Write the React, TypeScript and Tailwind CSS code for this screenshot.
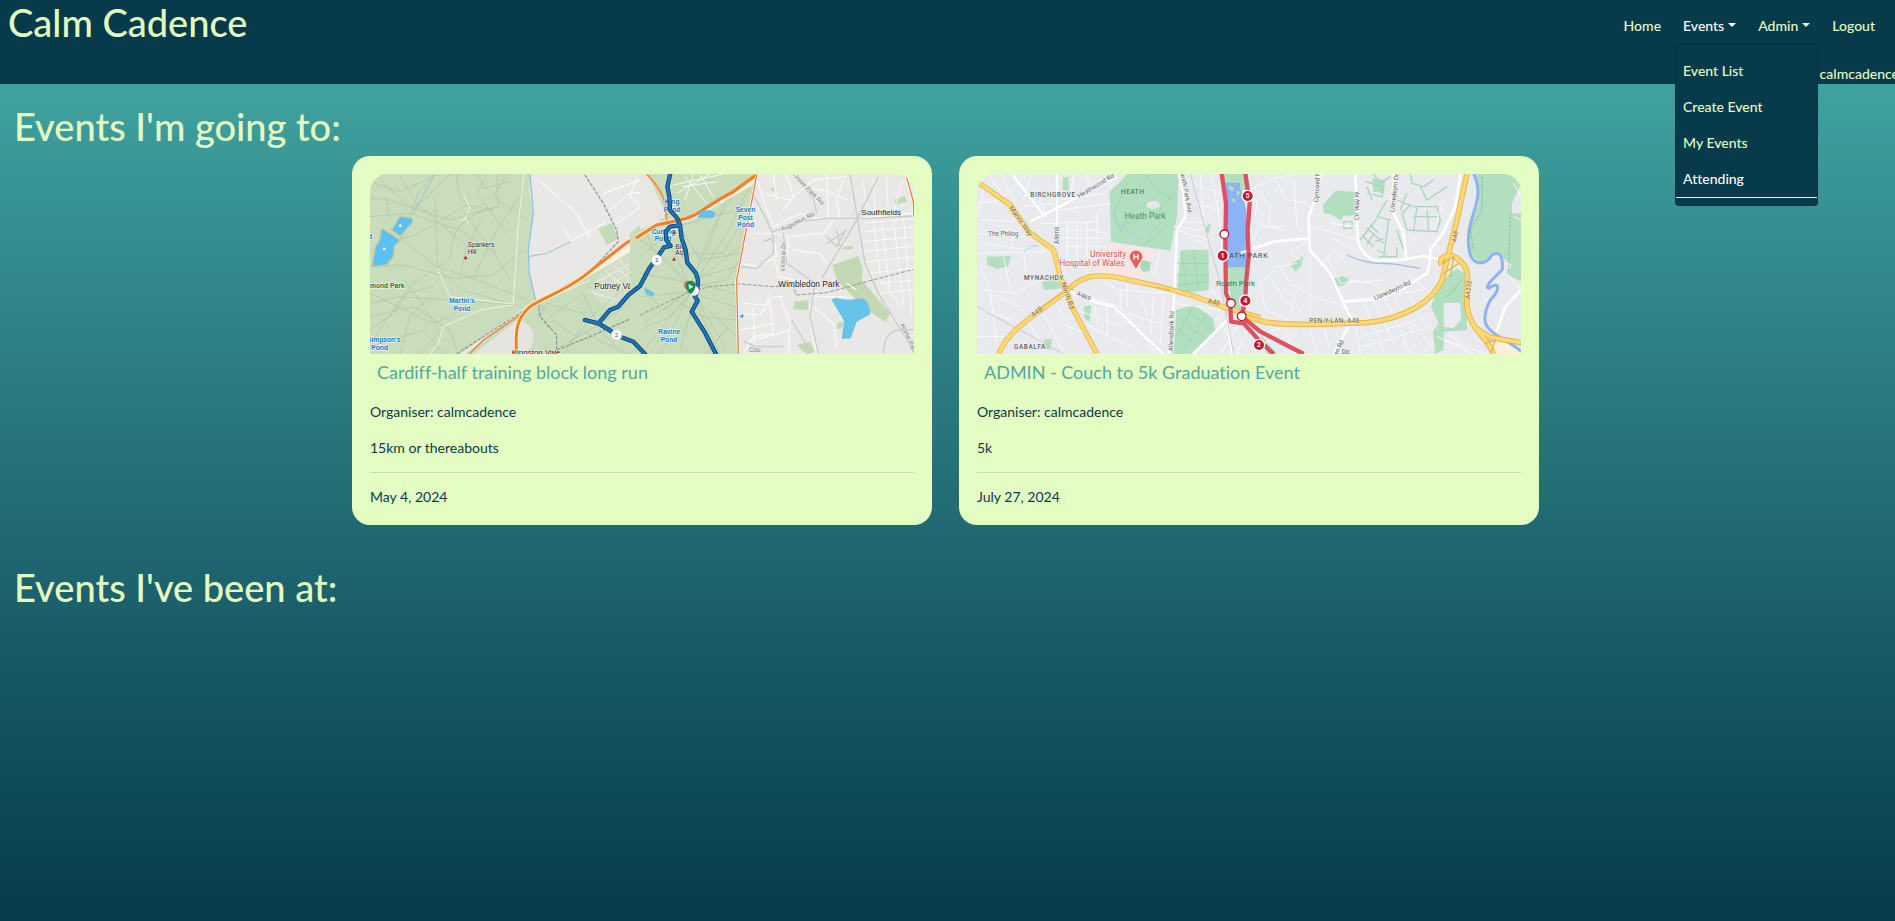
import React from "react";

const minor = { fill: "none", stroke: "#b5bfac", strokeWidth: 2 } as const;
const street = { fill: "none", stroke: "#f8f8f8", strokeWidth: 4 } as const;

function WimbledonMap() {
  return (
    <svg viewBox="0 0 1632 540" preserveAspectRatio="xMidYMid slice" role="img" aria-label="Route map of the Wimbledon area" className="block h-[180px] w-full rounded-t-[18px]" fontFamily="'Liberation Sans', sans-serif">
      <rect width="1632" height="540" fill="#e9e8e6" />
      <g transform="translate(-60 -72)">
        <path d="M60 72H540L538 120L550 200L535 300L536 360L555 450L330 612H60Z" fill="#c9dcbc" />
        <path d="M555 452L680 395L900 262V612H345L500 500Z" fill="#c9dcbc" />
        <path d="M370 612L500 512C545 510 560 555 545 590L520 612Z" fill="#e6e4de" />
        <path d="M745 235L785 220L806 265L770 285Z" fill="#c5dbb8" />
        <path d="M770 345L830 315L880 395L765 480L720 420Z" fill="#d4dfc9" />
        <g {...minor}>
          <path d="M60 95L150 125L260 75M60 145L110 148L300 210L440 170M80 80L190 180L300 72M108 148L120 205M150 80L200 160L340 280M250 75L205 130L155 270M255 140L262 350M320 72L325 130L360 180L310 260L300 330L265 352M60 200L180 190L330 240L440 310M440 72L445 170L380 190L330 225M385 72L400 115L475 95M60 300L150 265L260 350L370 385L530 450M145 270L205 250L350 165L430 180M60 350L160 345L310 385L430 375L520 300M340 185L420 290L480 390M262 352L190 400L130 490L60 540M60 460L150 440L310 450L500 465M60 500L190 470L300 540L320 600M160 390L210 450L270 545L210 612M60 430L250 520L300 500M75 560L165 430L250 410M150 612L180 500L240 440M265 360L340 420L490 465M400 200L350 290L330 380M520 120L440 240L370 380M60 590L220 540L280 612M410 72L380 130L470 250M470 72L430 140L530 210" />
          <path d="M565 455L620 520L680 560L750 470M600 500L700 430L740 520M630 590L720 540L900 420M640 612L690 540L830 612M760 470L840 400L900 370M570 500L590 460L700 490L800 590" />
        </g>
        <g {...street} strokeWidth="3" stroke="#eef2e6">
          <path d="M522 72L505 220L490 460M490 465L390 480L280 530L265 580L240 612M262 355L300 440M340 130L360 175L345 205L355 220M350 205L330 215M570 455L600 445L720 390M490 462L300 440M790 345L855 400M770 365L830 420M740 395L860 330M760 420L850 360M720 425L800 450M800 320L860 390" />
          <path d="M640 230L665 275M560 85L680 190L720 265M660 275L770 215M760 130L900 80M780 180L840 130L900 125M800 220L900 150M860 85L840 140L890 185" stroke="#fff" />
        </g>
        <path d="M540 72L550 190L535 300L538 370L557 450" fill="none" stroke="#8fc4df" strokeWidth="4" />
        <path d="M535 320L590 310L663 275M252 76L190 190" fill="none" stroke="#92c5d4" strokeWidth="3" />
        <path d="M320 612L555 460L720 365L805 275L800 240L760 160L703 72M565 458L570 500L620 555V612M620 600L720 560L900 480" fill="none" stroke="#979797" strokeWidth="4" strokeDasharray="11 4" />
        <path d="M358 612L400 570L515 492" fill="none" stroke="#ef812b" strokeWidth="4" />
        <path d="M500 612C495 540 500 505 540 470C585 440 640 425 700 380L900 262" fill="none" stroke="#fff1dc" strokeWidth="15" />
        <path d="M500 612C495 540 500 505 540 470C585 440 640 425 700 380L830 278L905 236" fill="none" stroke="#f28021" strokeWidth="9" />
        <path d="M95 235L133 258L150 272L133 290L130 320L110 345L65 351L77 288L88 270Z M125 240L150 198L188 204L188 217L150 259Z" fill="#5bc1f0" stroke="#c9caa0" strokeWidth="4" />
        <circle cx="151" cy="227" r="4" fill="#fff" /><circle cx="103" cy="297" r="4" fill="#fff" />
        <path d="M341 328L347 317L353 328Z" fill="#c1182d" />
        <path d="M882 420L900 405L920 425L905 442Z" fill="#6bbfe6" />
        <g fontSize="19" fill="#222" stroke="#eef2e6" strokeWidth="3" paintOrder="stroke">
          <text x="353" y="292">Spankers</text><text x="353" y="311">Hill</text>
          <text x="733" y="416" fontSize="25">Putney Vale</text><text x="485" y="616" fontSize="24">Kingston Vale</text>
        </g>
        <g fontSize="20" fontWeight="700" fill="#1677cf" stroke="#eaf5f4" strokeWidth="4" paintOrder="stroke">
          <text x="298" y="459">Martin's</text><text x="311" y="482">Pond</text><text x="51" y="575">Simpson's</text><text x="64" y="599">Pond</text>
          <text x="48" y="414" fill="#13763c">hmond Park</text><text x="54" y="267">d</text>
        </g>
      </g>
      <g transform="translate(810 -72)">
        <path d="M0 225L30 200L75 205L40 110L20 72H350L325 180L290 400L295 612H-30V250Z" fill="#c9dcbc" />
        <path d="M0 72L25 72L75 190L60 212L0 240Z" fill="#e8e7e3" />
        <path d="M577 345L655 318L668 355L665 390L750 490L738 516L690 485L640 440L590 390Z M765 148L795 138L800 154L765 166Z M462 455L505 450V480L460 478Z M610 290L640 287V298L608 299Z M470 585L510 575L525 605L500 612Z M390 115L405 112L402 126Z M595 515L610 515L605 535L590 538Z" fill="#c2d9b3" />
        <g {...minor} stroke="#b1c1ab">
          <path d="M0 320L110 230L290 180M0 370L160 400L300 290M10 520L150 420L260 250L330 110M20 590L150 430L290 470M150 410L40 300L20 250M150 410L100 300L40 240M150 410L220 230L290 120M155 410L260 390L300 330M0 440L150 425L240 612M60 612L150 430L290 560M120 600L165 440L260 600M0 270L60 310L150 405M165 400L285 430M180 380L290 350M120 230L180 330L300 310M10 420L70 480L140 430M0 540L90 500L155 425M200 612L270 520M75 430L190 500L290 510M130 310L250 310L290 240M190 340L240 190L270 130L330 110" />
        </g>
        <g {...street}>
          <path d="M350 85L380 180L400 230L480 190L530 205L640 205L820 190M370 130L450 150L520 90L620 80M400 72L410 150M440 72L460 140L430 180M560 72L565 200M610 90L590 150L600 205M510 115L570 125L620 150M340 250L400 250L410 320L350 350L310 340M400 250L445 260L440 340L510 390L530 430L510 470L515 540L530 612M450 260L550 250L580 210M460 300L540 310L560 340M400 325L420 380L500 400M310 460L380 465L390 430M300 490L360 495L400 440L430 440M340 470L345 590M390 460L400 550L340 560L310 612M420 440L450 520L445 612M300 540L400 520M310 580L450 540M530 440L620 440M520 470L580 520L590 590M620 400L650 420" />
          <path d="M670 220L820 205M675 245L820 230M672 275L820 260M674 305L820 287M680 335L820 320M690 370L820 355M710 400L820 390M720 430L820 420M700 210L720 370M725 210L750 430M760 205L790 460M790 200L815 500M730 400L790 480M670 90L680 190M700 80L705 190M740 80L745 190M790 85L760 190" strokeWidth="3" />
          <path d="M135 80L200 160M125 110L230 95M160 72L135 150M180 75L220 140M210 72L110 130M100 105L250 72" strokeWidth="3" />
        </g>
        <g fill="none" stroke="#cbcbcb" strokeWidth="4">
          <path d="M335 125L380 210L402 260L400 310L350 355L300 350M400 245L480 215L560 205L690 205L820 198M460 72L520 145L530 190M715 80L645 220L545 385M430 250L440 340L525 400L510 500L535 612M630 72L660 250L675 340L715 430L820 600M455 510L515 612M730 612C730 560 750 530 820 540M560 260L590 290L620 235M590 240L600 290M560 280L615 245M310 575L350 590L430 590M370 275L395 265V275" />
        </g>
        <path d="M0 495L150 425L210 410L300 402L400 410L460 405L468 435L560 428L680 395L820 358" fill="none" stroke="#999" strokeWidth="3" strokeDasharray="12 5" />
        <path d="M20 72C75 130 80 160 80 220" fill="none" stroke="#f2924b" strokeWidth="6" />
        <path d="M-12 264L50 225L110 212L150 204L330 100L350 75" fill="none" stroke="#fff0df" strokeWidth="16" />
        <path d="M-12 264L50 225L110 212C180 200 190 170 280 125L350 74" fill="none" stroke="#ef812b" strokeWidth="10" />
        <path d="M350 74L338 140L322 220L290 390L295 612M800 82L820 155L822 200" fill="none" stroke="#fff" strokeWidth="8" />
        <path d="M350 74L338 140L322 220L290 390L295 612M800 82L820 155L822 200" fill="none" stroke="#ef7a3a" strokeWidth="4" />
        <path d="M575 450C590 435 605 455 640 448C690 435 685 470 692 492L650 515L632 565L605 567L612 512Z M172 203L182 183L210 180L228 188L220 204Z M12 412L45 430L35 440L18 432Z" fill="#67c3ea" />
        <path d="M298 497h8v-7l5 7-5 7z" fill="#328fd0" />
        <g fontSize="20" fontWeight="700" fill="#1677cf" stroke="#eaf5f4" strokeWidth="4" paintOrder="stroke">
          <text x="74" y="163">King</text><text x="71" y="185">Pond</text><text x="35" y="251">Curling</text><text x="44" y="273">Pond</text>
          <text x="287" y="186">Seven</text><text x="295" y="209">Post</text><text x="292" y="232">Pond</text><text x="55" y="553">Ravine</text><text x="62" y="575">Pond</text>
        </g>
        <g fontSize="20" fill="#222" stroke="#f3f3f1" strokeWidth="3" paintOrder="stroke">
          <text x="106" y="297">Big</text><text x="106" y="316">Alp</text><text x="664" y="195" fontSize="24">Southfields</text><text x="415" y="410" fontSize="25">Wimbledon Park</text>
          <g fill="#777" fontSize="19"><text transform="translate(463 82) rotate(46)">Inner Park Rd</text><text transform="translate(427 244) rotate(-26)">Augustus Rd</text><text transform="translate(434 365) rotate(-88)">Victoria Dr</text><text transform="translate(781 525) rotate(65)">Home Park</text><text x="327" y="606">Cou</text></g>
        </g>
        <path d="M96 251L103 240L109 251Z M96 332L102 320L108 332Z" fill="#b13b39" />
        <g fill="none" strokeLinejoin="round" strokeLinecap="round">
          {[{ c: "#123e6b", w: 13 }, { c: "#1c75b8", w: 8 }].map((s) => (
            <path key={s.c} stroke={s.c} strokeWidth={s.w} d="M91 70L82 110L88 140L90 180L112 205L120 225L125 265L137 300L142 338L168 370L174 390L172 420L165 440L173 452L155 485L195 548L228 612M115 226L90 230L77 245L79 270L92 288L72 292L50 325L28 355L0 408L-35 435L-65 470L-90 480L-125 520L-165 510M-125 520L-60 560L-20 575L15 612" />
          ))}
        </g>
        <circle cx="50" cy="330" r="16" fill="#fff" stroke="#ccc" strokeWidth="2" /><circle cx="-70" cy="554" r="16" fill="#fff" stroke="#ccc" strokeWidth="2" />
        <circle cx="162" cy="422" r="15" fill="#fff" />
        <circle cx="144" cy="405" r="13" fill="#e5796b" />
        <path d="M152 433C135 417 137 410 137 409A15 15 0 1 1 166 412C164 421 158 427 152 433Z" fill="#158d45" /><path d="M146 402L160 410L147 418Z" fill="#fff" />
        <g fontSize="17" fill="#444" textAnchor="middle"><text x="50" y="336">3</text><text x="-70" y="560">2</text></g>
      </g>
    </svg>
  );
}

type Marker = { x: number; y: number; n?: string };
const markers: Marker[] = [
  { x: 862, y: 138, n: "5" }, { x: 787, y: 317, n: "1" }, { x: 855, y: 452, n: "4" }, { x: 896, y: 585, n: "2" },
  { x: 792, y: 253 }, { x: 812, y: 460 }, { x: 844, y: 499 },
];

function CardiffMap() {
  return (
    <svg viewBox="0 0 1632 540" preserveAspectRatio="xMidYMid slice" role="img" aria-label="Route map of the Roath Park area in Cardiff" className="block h-[180px] w-full rounded-t-[18px]" fontFamily="Roboto, sans-serif">
      <rect width="1632" height="540" fill="#e8eaee" />
      <g transform="translate(-50 -72)">
        <path d="M475 100L500 72H655L650 200L630 302L452 275L448 125Z M308 82L325 82V122L307 120Z M78 320L152 318L143 348L110 357L82 345Z M245 395L290 388L305 415L250 420Z M370 470L392 465L388 515L372 505Z M660 300L745 300L745 420L650 432Z M648 480L700 465L758 505L765 540L690 612H640Z M738 220L752 220L746 250L735 245Z M252 568L275 568L270 600L250 595Z M790 72H850L855 110H795Z M800 350H862L850 480L815 480Z" fill="#b1dfc0" />
        <path d="M452 280L590 300L545 385L430 370L385 350Z" fill="#fae5e5" />
        <path d="M545 330L572 336L568 362L548 366L538 350Z" fill="#a5dab7" />
        <path d="M797 98L838 98L858 180L862 352H800Z" fill="#8cb4f5" />
        <path d="M808 105l14 10-6 10-12-8zM828 120l12 8-9 14zM812 145l16 4-8 10z" fill="#b5dfbe" />
        <path d="M558 160L575 152L595 155L600 170L575 178L560 172Z" fill="#e3e8e7" />
        <g fill="none" stroke="#8bc99f" strokeWidth="2"><path d="M480 240L520 180L555 160M555 75L600 130L640 150M565 180L600 220L560 260M500 100L460 190L490 260M475 230L590 190L640 130M620 220L560 280M665 310L680 425M700 300L715 420M650 340H745M650 375H745M650 405L745 395M650 500L740 570M680 480L755 540M700 465L650 560M740 490L670 600M648 530L720 600" strokeDasharray="6 3" /></g>
        <g {...street} stroke="#f8f9fb" strokeWidth="3">
          <path d="M70 120L50 200M90 80L130 140L200 72M50 160L120 150M60 210L170 215M50 250L200 260M120 72L165 160M210 80L190 150M230 130L260 200M50 310L240 305L280 300M160 260L150 310M80 280L200 300M190 170L280 160M240 220L290 220L400 215M300 240H390L440 250M300 265H450M305 290H440M320 210V330M350 210V330M380 215V370M410 190V280M300 150L440 130M340 72L330 150M380 72L390 130M300 180L450 160M300 330L430 335M60 340L90 430L180 470M70 420L170 430L250 380M130 320L150 420M190 310L200 400M60 480L160 510M50 560L130 560M90 430L110 580M300 520L400 560M200 510L260 612M250 490L310 612M290 460L340 560M340 430L480 470L590 612M400 440L410 520M440 455V560M350 480L480 530M370 520L510 590M480 420V480M540 430L560 500M440 400L480 420L640 430M500 400V470M600 300L580 380M640 230L720 240L760 210M660 215L740 220M720 72L730 210M690 260L740 290M755 80L775 190L790 350M700 100L780 130M700 160L780 180M650 240L745 270M640 460L780 480M750 420L790 460M770 500L840 612M700 612L800 510M830 530L780 612M850 560L830 612M580 440L570 560M610 440L600 580M500 490L590 520" />
        </g>
        <g {...street} stroke="#fff" strokeWidth="7"><path d="M157 75L195 125L255 200M210 215L470 80M290 72V285M655 72L670 130L675 200L650 240L640 470L625 612M325 425L400 455L460 470L610 612M700 612L800 510M800 500L815 612" /></g>
        <path d="M50 470L310 612M690 72L780 400L820 612" fill="none" stroke="#c9cbd0" strokeWidth="3" />
        <path d="M190 305C210 295 200 285 235 288M460 210L540 270" fill="none" stroke="#aecbf8" strokeWidth="3" />
        {[{ c: "#eab64d", w: 16 }, { c: "#fbd876", w: 11 }].map((s) => (
          <path key={s.c} d="M58 100L150 165L205 245L280 300L300 380L340 480L410 612M115 612C135 560 180 525 235 485L310 430C370 370 410 375 460 380L600 410L700 438L800 475L900 503" fill="none" stroke={s.c} strokeWidth={s.w} />
        ))}
        <path d="M220 490L310 425M340 420L300 400M585 412L630 420" fill="none" stroke="#edb950" strokeWidth="4" />
        <g fill="#55595f" stroke="#f6f7f8" strokeWidth="3" paintOrder="stroke" fontSize="19" fontWeight="500" letterSpacing="2">
          <text x="210" y="140">BIRCHGROVE</text><text x="482" y="131" fill="#4c7a60" stroke="none">HEATH</text><text x="191" y="389">MYNACHDY</text><text x="161" y="598">GABALFA</text>
        </g>
        <g fill="#606468" stroke="#f6f7f8" strokeWidth="3" paintOrder="stroke" fontSize="19">
          <text x="84" y="257">The Philog</text><text transform="translate(356 145) rotate(-31)">Heathwood Rd</text><text transform="translate(659 62) rotate(79)">Heath Park Ave</text><text transform="translate(296 282) rotate(-90)">Allens</text><text transform="translate(637 604) rotate(-88)">Allensbank Rd</text><text transform="translate(348 435) rotate(24)">A469</text>
          <g fill="#80602f" stroke="#fdeab5" fontSize="21"><text transform="translate(145 174) rotate(54)">Manor Way</text><text transform="translate(303 400) rotate(72)">North Rd</text><text transform="translate(218 502) rotate(-36)">A48</text><text transform="translate(741 459) rotate(13)">A48</text></g>
          <text x="493" y="206" fontSize="25" fill="#50946b" stroke="none">Heath Park</text>
          <g fill="#dc4f4f" fontSize="25"><text x="389" y="322">University</text><text x="297" y="348">Hospital of Wales</text></g>
        </g>
        <path d="M527 356L513 333A19 19 0 1 1 541 333Z" fill="#e75f5b" /><path d="M521 312v17M533 312v17M521 320h12" stroke="#fff" strokeWidth="4" />
      </g>
      <g transform="translate(790 -72)">
        <path d="M248 165L285 122L345 125V195L310 198L300 212L278 195L250 190Z M700 72H843V100L815 160V190H843V395L795 370L815 345L770 310L720 340L690 310L685 240L715 160Z M648 355L672 370L680 490L680 540L610 545V600L585 612L578 545L595 520L572 470L590 420L620 380Z M150 345L188 318L182 350L165 365Z M282 385L310 378L325 388L318 405L285 410Z M0 510L60 550L80 612H110L50 540Z M0 90L15 95V120H0Z M395 85L435 90L430 130L400 125Z" fill="#b1dfc0" />
        <path d="M610 460L660 458L662 510L638 535L610 530Z" fill="#e9ebee" /><path d="M770 560L843 600V612H750Z" fill="#fbf0d9" />
        <g fill="none" stroke="#a9d6ba" strokeWidth="4">
          <path d="M310 215H335V235H310ZM375 95L430 110L425 140L380 130M400 72L420 100L450 80M360 270L410 205M380 235L430 280M370 260L400 290M410 300L440 315M440 150L410 200L450 210M445 210L430 320M470 150L520 170L590 170L600 210L590 245L500 240L485 190L510 165M510 72L515 100L550 110L580 90M500 130L480 180M530 170L520 240M560 180L565 245M540 110L560 150L620 110M470 240L490 300M415 320H470V290M390 225L415 250M400 250L380 285M455 100L470 140M520 200H590M380 110L395 150M405 275L430 265" />
        </g>
        <g {...street} stroke="#f8f9fb" strokeWidth="3">
          <path d="M30 120L100 85L160 72M60 130L90 170L85 230L130 240M100 80L140 150L200 160M50 150L45 200L80 240M160 90L170 230M30 280L60 230L130 230M200 270L150 310L180 330M60 400L110 350L170 340M60 400L75 480L150 510M90 380L130 450L200 500M210 330V510M240 350L280 300L320 340M120 350L150 400L220 440L290 460M170 420L150 490M300 420L330 390L400 400L440 440M340 490L360 612M370 460L430 600M400 450L460 580M430 440L500 580M460 430L520 550M490 410L550 510M350 530L540 470M360 560L560 500M370 590L570 530M330 450L550 420M500 370L570 430M270 260L340 300M260 320L300 400L430 390M40 560L130 530M70 580L170 550M130 530L160 612M210 540L230 612M250 530L270 600M520 520L580 600M490 570L510 612M580 260L600 310M540 250L500 290M610 150L580 240M270 220L345 230M220 230L350 270M590 560L700 612M610 570L740 612M630 550L680 612M780 350L843 420M820 100L843 140M820 200L843 210" />
        </g>
        <g {...street} stroke="#fff" strokeWidth="8">
          <path d="M240 72L220 160L205 200L208 300L270 370L310 460L335 510L280 612M0 310L100 275L205 265M345 72L352 270C358 300 385 330 410 332L480 330L550 318L610 330M460 72L455 180L490 250L497 325M660 72L645 170L610 245L570 300L568 340L560 370L490 415L410 448L310 455M843 420L795 470L760 570" />
        </g>
        <path d="M320 315C390 350 430 335 480 345L540 355" fill="none" stroke="#abbfe4" strokeWidth="4" />
        <path d="M700 72C740 150 675 200 685 290C690 350 735 350 755 315C780 300 790 325 785 360C760 385 730 410 745 415C780 390 780 420 750 450C730 490 730 520 745 535C765 560 810 575 843 605" fill="none" stroke="#8eb3f3" strokeWidth="9" />
        <path d="M725 80V180L690 240L700 300M810 190L805 360M665 390L620 440" fill="none" stroke="#6ca987" strokeWidth="2" strokeDasharray="7 4" />
        {[{ c: "#eab64d", w: 17 }, { c: "#fbd876", w: 11 }].map((s) => (
          <path key={s.c} d="M0 495L70 515C150 530 280 520 380 518C500 505 580 450 605 390L650 210L680 72M605 345C590 325 620 305 650 325C700 360 675 400 680 470C690 540 740 560 760 612M700 530L750 562L843 578" fill="none" stroke={s.c} strokeWidth={s.w} />
        ))}
        <path d="M605 340L640 320L630 380M655 340L610 370M735 580L765 570L750 612" fill="none" stroke="#e8b34a" strokeWidth="4" />
        <g fill="#55595f" stroke="#f6f7f8" strokeWidth="3" paintOrder="stroke" fontSize="19">
          <text x="207" y="520" letterSpacing="1" stroke="#fdeab5">PEN-Y-LAN, A48</text>
          <text transform="translate(233 157) rotate(-86)">Cyncoed Rd</text><text transform="translate(355 211) rotate(-89)">Cir Way W</text><text transform="translate(461 187) rotate(-83)">Llanedeyrn Dr</text><text transform="translate(404 451) rotate(-24)">Llanedeyrn Rd</text><text transform="translate(291 617) rotate(-65)">en Rd</text><text x="304" y="612">Do</text>
          <g fill="#80602f" stroke="#fdeab5"><text transform="translate(648 277) rotate(-82)">A48</text><text transform="translate(688 447) rotate(-84)">A4232</text></g>
        </g>
      </g>
      <g transform="translate(-50 -72)">
        <path d="M784 70L797 160L795 290L797 430L810 460L812 515L850 520L900 575L940 612M855 70L868 160L862 240L865 320L857 400L855 450L844 499L900 545L1030 612" fill="none" stroke="#da4658" strokeWidth="13" strokeLinejoin="round" opacity=".93" />
        <text x="807" y="325" fontSize="22" letterSpacing="2" fill="#44484e">ATH PARK</text>
        <text x="767" y="408" fontSize="24" fill="#42755a">Roath Park</text>
        {markers.map((m) => (
          <g key={`${m.x}-${m.y}`}>
            <circle cx={m.x} cy={m.y} r={m.n ? 17 : 13} fill={m.n ? "#cf1332" : "#fff"} stroke={m.n ? "#fff" : "#b81932"} strokeWidth="4" />
            {m.n && <text x={m.x} y={m.y + 7} textAnchor="middle" fontSize="20" fontWeight="700" fill="#fff">{m.n}</text>}
          </g>
        ))}
      </g>
    </svg>
  );
}

const events = [
  { title: "Cardiff-half training block long run", organiser: "calmcadence", detail: "15km or thereabouts", date: "May 4, 2024", Map: WimbledonMap },
  { title: "ADMIN - Couch to 5k Graduation Event", organiser: "calmcadence", detail: "5k", date: "July 27, 2024", Map: CardiffMap },
];

const menu = ["Event List", "Create Event", "My Events", "Attending"];

function Caret() {
  return <span aria-hidden="true" className="mb-1 ml-1 inline-block border-x-4 border-t-4 border-x-transparent border-t-current align-middle" />;
}

export default function App() {
  return (
    <div className="min-h-screen overflow-hidden bg-linear-to-b from-[#46ada8] to-[#073b4c] font-['Lato',sans-serif] text-sm leading-5 text-[#e3fdc1] [font-variant-ligatures:none]">
      <header className="bg-[#073a4b] font-medium">
        <div className="flex items-start justify-between pr-5 pl-2">
          <a href="#" className="text-[38px] leading-[44px]">Calm Cadence</a>
          <nav aria-label="Main" className="flex gap-[22px] pt-4">
            <a href="#">Home</a>
            <div className="relative">
              <button type="button" aria-expanded="true" aria-haspopup="true" className="block text-white">Events<Caret /></button>
              <ul className="absolute top-7 -left-2 z-10 w-[143px] rounded-sm border border-black/15 bg-[#073a4b] pt-[9px] pb-[7px]">
                {menu.map((item) => (
                  <li key={item}>
                    <a
                      href="#"
                      aria-current={item === "Attending" ? "page" : undefined}
                      className="block border-b border-transparent px-[7px] pt-[7px] pb-2 aria-[current=page]:border-[#e3fdc1] aria-[current=page]:text-white"
                    >
                      {item}
                    </a>
                  </li>
                ))}
              </ul>
            </div>
            <button type="button" aria-haspopup="true" className="block">Admin<Caret /></button>
            <a href="#">Logout</a>
          </nav>
        </div>
        <p className="-mr-1 pt-5 text-right">calmcadence</p>
      </header>
      <main>
        <h1 className="px-3.5 pt-5 text-[38px] leading-[44px] font-medium">Events I'm going to:</h1>
        <div className="pt-2 pr-1">
          <div className="mx-auto grid max-w-[1187px] grid-cols-2 gap-[27px]">
            {events.map(({ title, organiser, detail, date, Map }) => (
              <article key={title} className="rounded-[18px] bg-[#e4fdc2] p-[18px] text-[#073b4c]">
                <Map />
                <h2 className="px-[7px] pt-1.5 text-lg leading-6 text-[#4fa9a2]"><a href="#">{title}</a></h2>
                <p className="pt-[18px]">Organiser: {organiser}</p>
                <p className="pt-4">{detail}</p>
                <hr className="mt-[14px] border-[#c2dcb0]" />
                <p className="pt-[14px]">{date}</p>
              </article>
            ))}
          </div>
        </div>
        <h1 className="px-3.5 pt-10 text-[38px] leading-[44px] font-medium">Events I've been at:</h1>
      </main>
    </div>
  );
}
